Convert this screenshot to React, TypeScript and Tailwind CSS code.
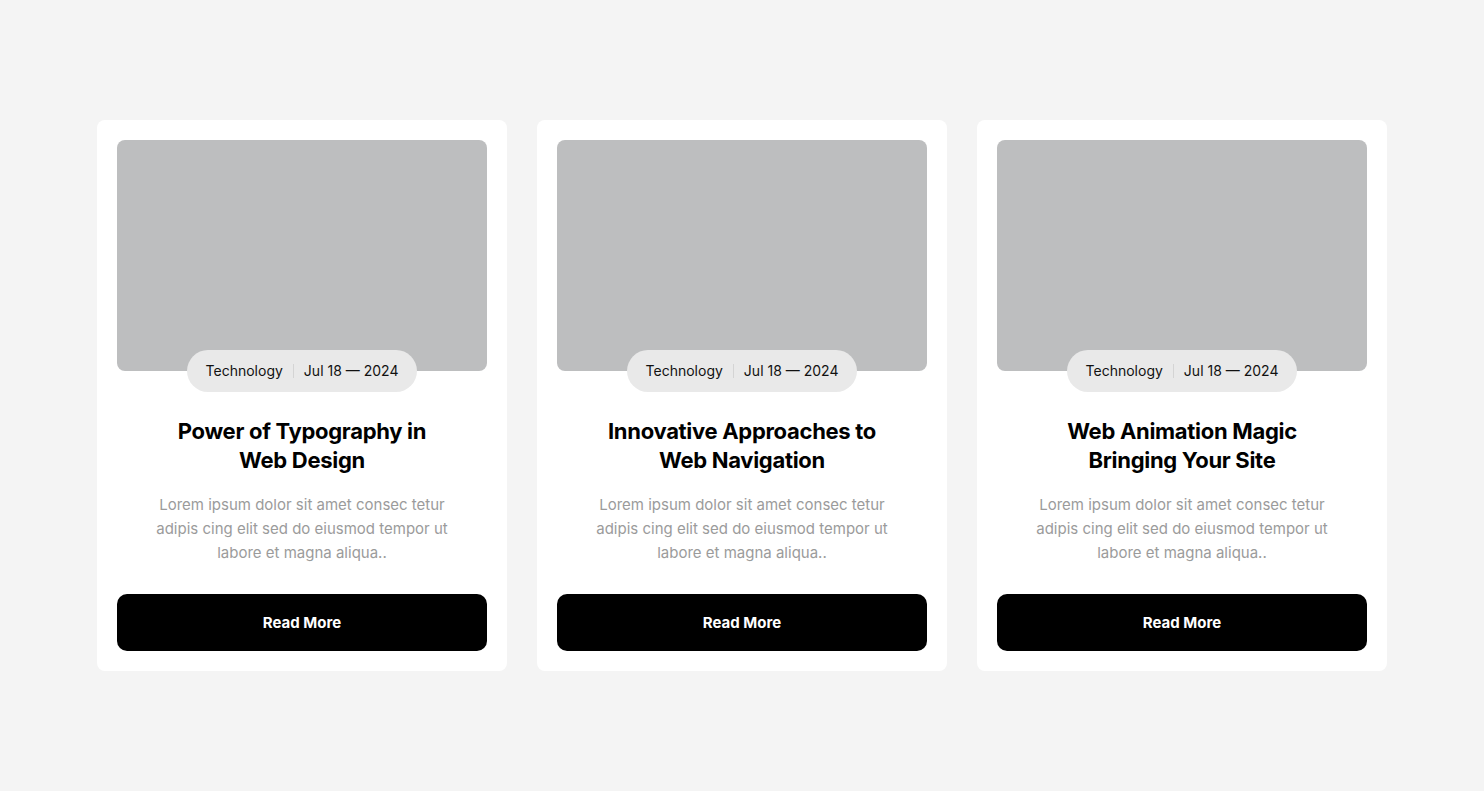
// Blog card grid: three post cards with image placeholder, meta pill, title, excerpt and CTA.

import React from 'react'

interface Post {
  category: string
  date: string
  title: string[]
  excerpt: string
}

const posts: Post[] = [
  {
    category: 'Technology',
    date: 'Jul 18 — 2024',
    title: ['Power of Typography in', 'Web Design'],
    excerpt: 'Lorem ipsum dolor sit amet consec tetur adipis cing elit sed do eiusmod tempor ut labore et magna aliqua..',
  },
  {
    category: 'Technology',
    date: 'Jul 18 — 2024',
    title: ['Innovative Approaches to', 'Web Navigation'],
    excerpt: 'Lorem ipsum dolor sit amet consec tetur adipis cing elit sed do eiusmod tempor ut labore et magna aliqua..',
  },
  {
    category: 'Technology',
    date: 'Jul 18 — 2024',
    title: ['Web Animation Magic', 'Bringing Your Site'],
    excerpt: 'Lorem ipsum dolor sit amet consec tetur adipis cing elit sed do eiusmod tempor ut labore et magna aliqua..',
  },
]

function PostCard({ post }: { post: Post }) {
  return (
    <div className="flex w-[410px] flex-col items-center rounded-lg bg-white p-5">
      {/* Image placeholder */}
      <div className="h-[231px] w-full rounded-lg bg-[#bdbebf]" />
      {/* Meta pill */}
      <div className="-mt-[21px] flex h-[42px] items-center rounded-full bg-[#e9e9e9] px-[19px] pb-px text-[14px] text-[#111]">
        <span>{post.category}</span>
        <span className="mx-[10px] h-[14px] w-px bg-[#d4d4d4]" />
        <span>{post.date}</span>
      </div>
      {/* Title */}
      <h3 className="mt-[25px] text-center text-[22px] font-bold leading-[29px] tracking-[-0.3px] text-black">
        {post.title[0]}
        <br />
        {post.title[1]}
      </h3>
      {/* Excerpt */}
      <p className="mt-[18px] max-w-[300px] text-center text-[15px] leading-[24px] text-[#9b9b9b]">
        {post.excerpt}
      </p>
      {/* Action */}
      <button
        type="button"
        className="mt-[29px] h-[57px] w-full rounded-[10px] bg-black pt-px text-[15px] font-bold text-white"
      >
        Read More
      </button>
    </div>
  )
}

export default function App() {
  return (
    <div
      className="flex min-h-[791px] justify-center bg-[#f4f4f4] pt-[120px]"
      style={{ fontFamily: 'Inter, "Noto Sans", sans-serif' }}
    >
      <div className="flex items-start gap-[30px]">
        {posts.map((post, i) => (
          <PostCard key={i} post={post} />
        ))}
      </div>
    </div>
  )
}
